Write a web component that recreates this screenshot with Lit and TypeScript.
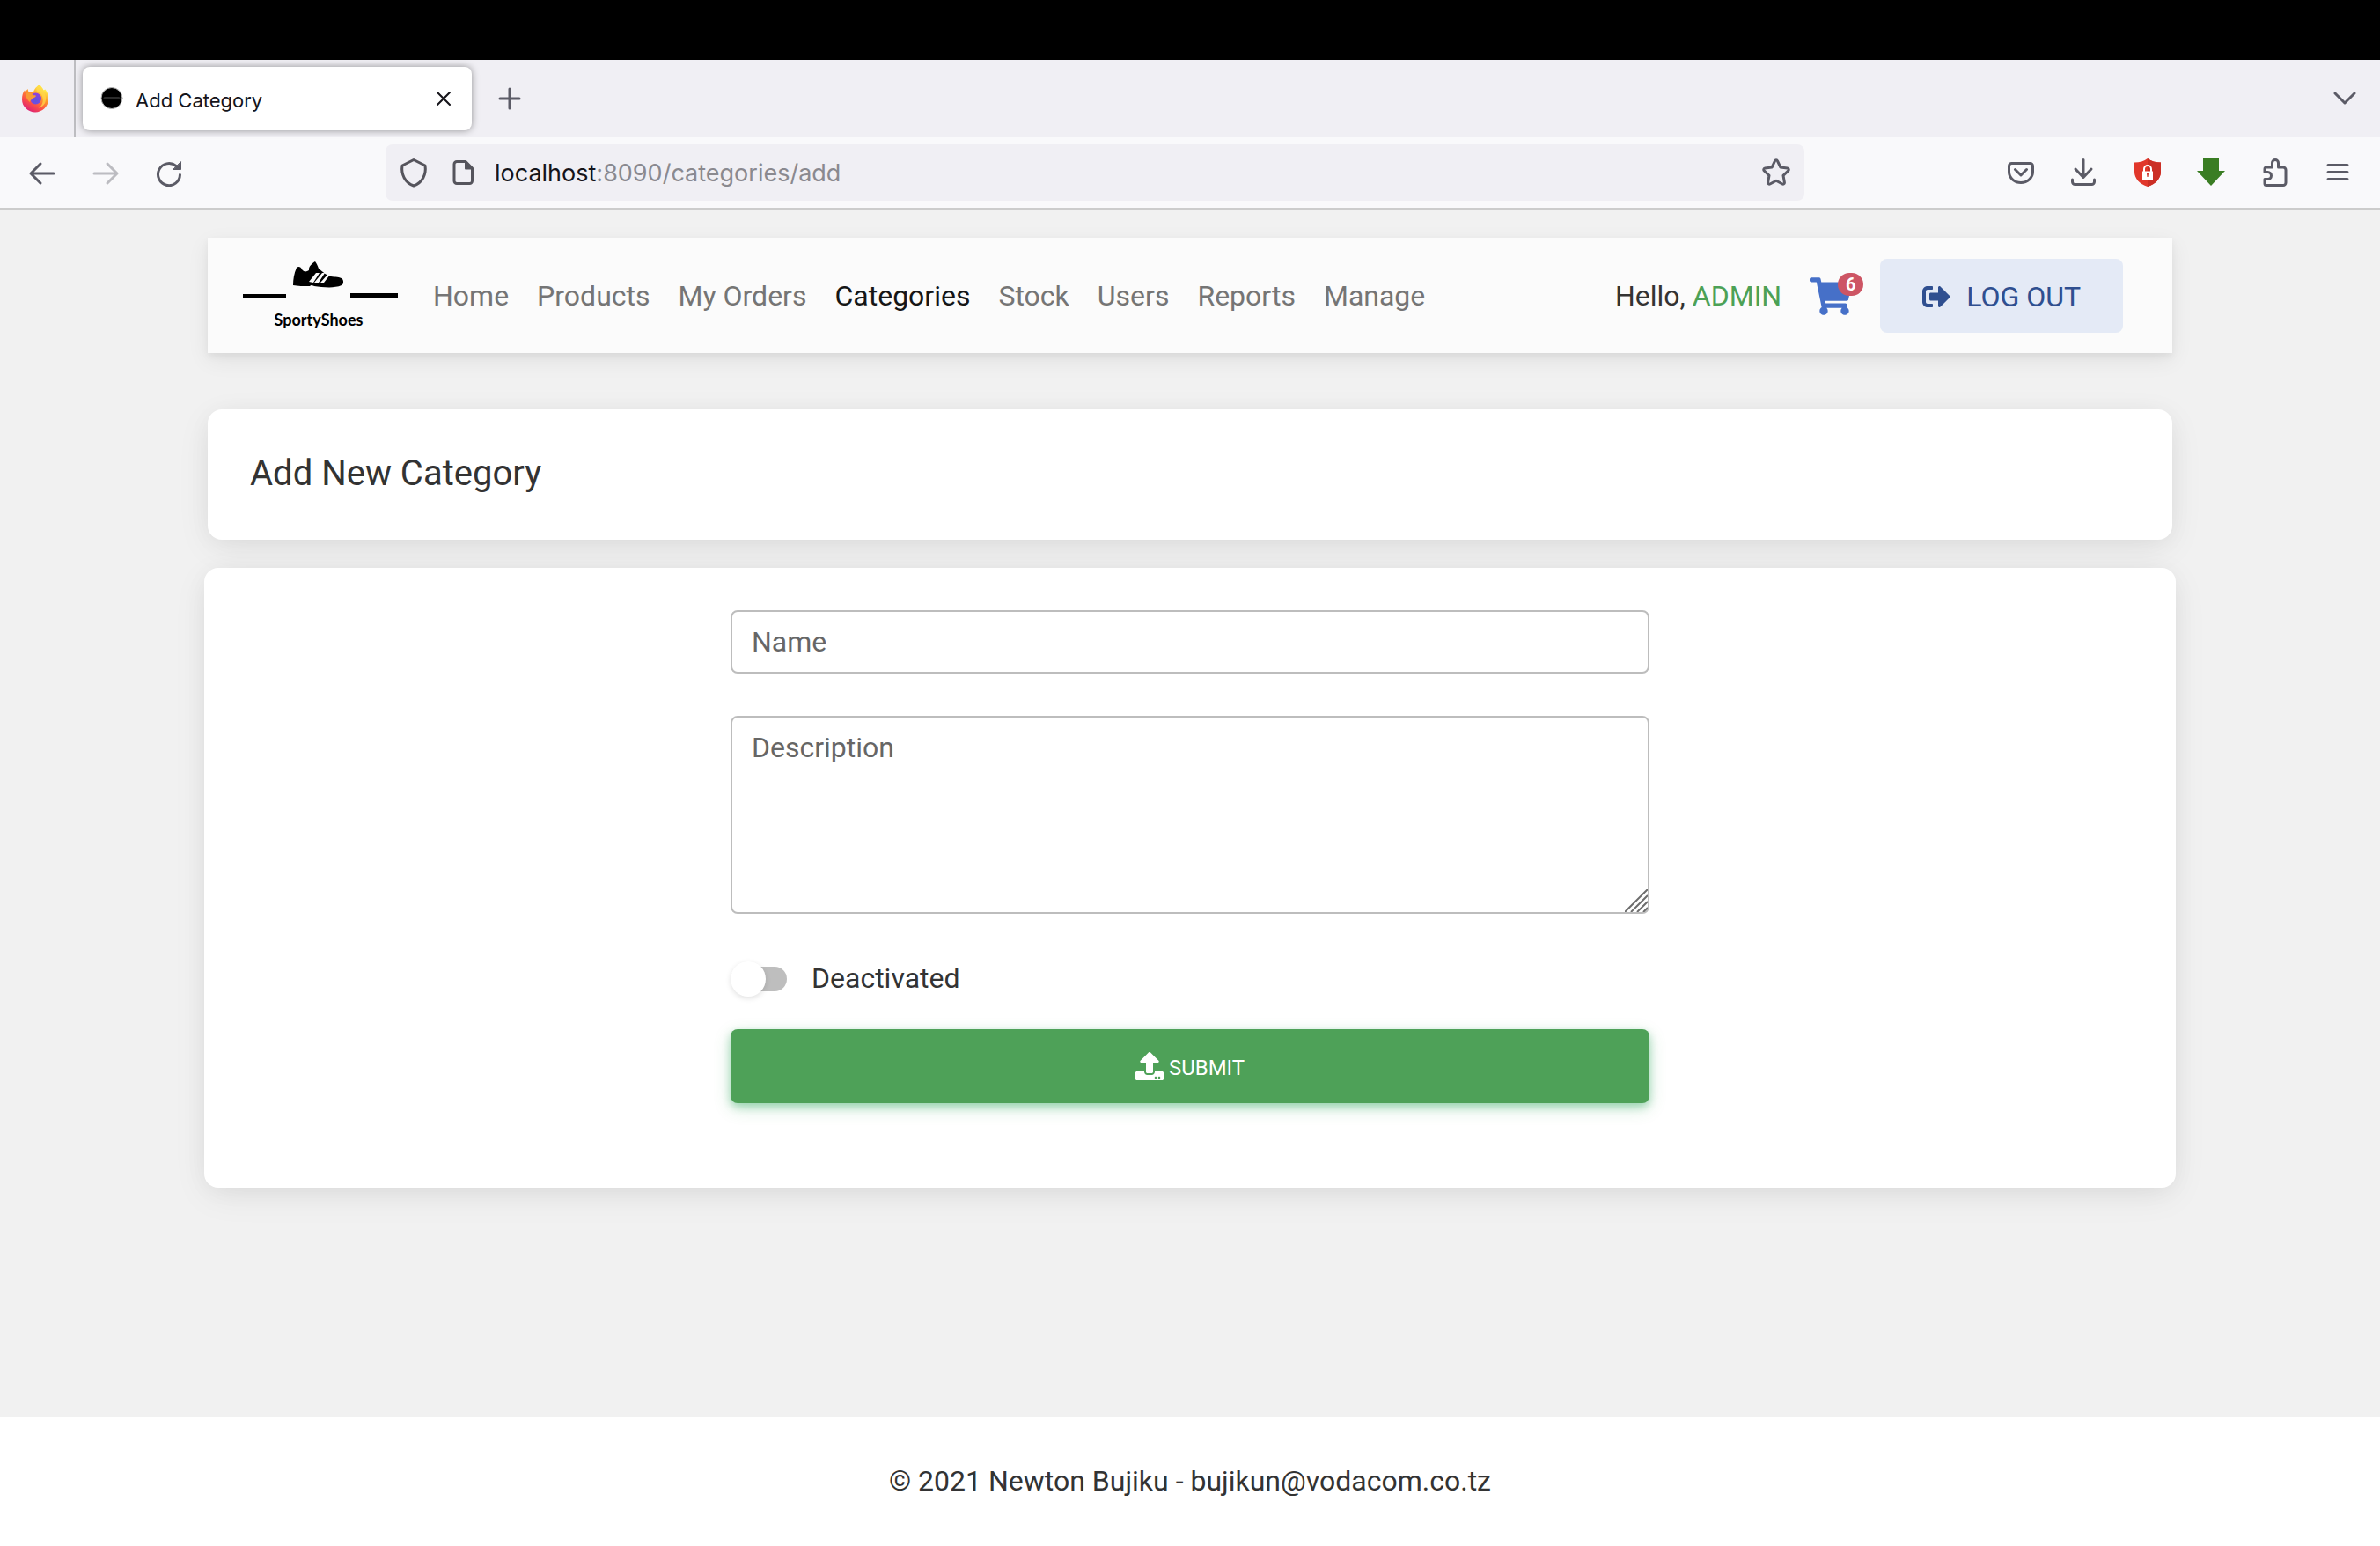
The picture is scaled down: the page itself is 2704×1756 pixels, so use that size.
import { LitElement, html, css } from "lit";
import { customElement, property, state } from "lit/decorators.js";
import { classMap } from "lit/directives/class-map.js";

const sans = css`Roboto, "Liberation Sans", sans-serif`;
const chrome = css`Inter, "Liberation Sans", sans-serif`;

@customElement("browser-chrome")
class BrowserChrome extends LitElement {
  static styles = css`
    :host { display: block; font-family: ${chrome}; }
    .menubar { height: 68px; background: #000; }
    .tabs { display: flex; align-items: center; height: 88px; background: #f0eff4; }
    .pinned { display: flex; align-items: center; align-self: stretch; padding: 0 28px 0 24px; margin-right: 8px; border-right: 2px solid #bdbdc1; }
    .tab { display: flex; align-items: center; gap: 14px; box-sizing: border-box; width: 442px; height: 72px; padding: 0 16px 0 20px; border-radius: 8px; background: #fff; box-shadow: 0 0 8px rgba(0, 0, 0, 0.4); }
    .tab-title { flex: 1; padding-top: 3px; font-size: 22px; line-height: 32px; color: #15141a; }
    button { display: flex; align-items: center; justify-content: center; flex: none; padding: 0; border: 0; background: none; color: #5b5b66; }
    svg { display: block; fill: none; stroke: currentColor; stroke-width: 3; stroke-linecap: round; stroke-linejoin: round; }
    .solid { stroke: none; }
    .close { width: 32px; height: 32px; color: #15141a; }
    .close svg { stroke-width: 2; }
    .new-tab { width: 86px; height: 72px; }
    .all-tabs { width: 72px; height: 72px; margin-left: auto; margin-right: 4px; }
    .toolbar { display: flex; align-items: center; height: 80px; padding: 0 12px; background: #f9f9fb; border-bottom: 2px solid #ccc; }
    .tool { width: 72px; height: 72px; }
    .tool:disabled { color: #bcbcc1; }
    .address { display: flex; align-items: center; flex: 1; box-sizing: border-box; height: 64px; margin: 0 210px; padding: 0 14px 0 12px; border-radius: 8px; background: #f0eff4; color: #55545c; }
    .address .page { margin: 0 24px; }
    .url { flex: 1; padding-top: 2px; font-size: 27px; line-height: 40px; color: #8a898f; }
    .host { color: #15141a; }
    .star { color: #5b5b66; }
  `;

  render() {
    return html`
      <div class="menubar"></div>
      <div class="tabs">
        <div class="pinned">
          <svg class="solid" width="32" height="32" viewBox="0 0 31 32">
            <defs>
              <linearGradient id="flame" x1="0.85" y1="0.05" x2="0.3" y2="1">
                <stop offset="0.1" stop-color="#fff04a" />
                <stop offset="0.4" stop-color="#ff9a2a" />
                <stop offset="0.7" stop-color="#fb5145" />
                <stop offset="1" stop-color="#dc1e78" />
              </linearGradient>
              <radialGradient id="globe" cx="0.5" cy="0.7" r="0.7">
                <stop offset="0" stop-color="#5a55e0" />
                <stop offset="1" stop-color="#9340d8" />
              </radialGradient>
            </defs>
            <path fill="url(#flame)" d="M20 0c2 1.500 4 4 5 6.500l2-1c2.500 3 3.500 7 3.500 11C30.500 25 23.500 31.500 15.500 31.500S.5 25 .5 17c0-4.500 1-8 3-10.500l1 1.500 2.500-3 1 3.500c1.500-.6 3-.5 5.500-.3C14.500 5 17 2.500 20 0z" />
            <circle fill="url(#globe)" cx="16" cy="16" r="6.500" />
            <path fill="#f89a35" d="M4.500 10c3-1.500 6-.5 8.500 2 1.500.4 3 0 3.500 1-.5 1.500-3 2-4 3-1 1.200-2.500 1.500-3 4-2.500-2-5-6-5-10z" />
            <path fill="#ffd84a" d="M20 0c-3 3-4 6-2 8 3 1 6 4 6 8 1 5-2 9-5 11 7-2 10-8 8-15-1-5-4-9-7-12z" opacity=".75" />
          </svg>
        </div>
        <div class="tab">
          <svg width="26" height="26" viewBox="0 0 26 26">
            <circle cx="13" cy="12.500" r="12" fill="#000" stroke="#b5b5b5" stroke-width="1" />
            <path d="M5 12.500h16" stroke="#2c2c2c" stroke-width="3" />
          </svg>
          <span class="tab-title">Add Category</span>
          <button class="close" aria-label="Close tab">
            <svg width="18" height="18" viewBox="0 0 18 18"><path d="M2 2l14 14M16 2L2 16" /></svg>
          </button>
        </div>
        <button class="new-tab" aria-label="New tab">
          <svg width="26" height="26" viewBox="0 0 26 26"><path d="M13 2v22M2 13h22" /></svg>
        </button>
        <button class="all-tabs" aria-label="List all tabs">
          <svg width="26" height="16" viewBox="0 0 26 16"><path d="M2 2l11 11L24 2" /></svg>
        </button>
      </div>
      <div class="toolbar">
        <button class="tool" aria-label="Back">
          <svg width="32" height="32" viewBox="0 0 32 32"><path d="M29 17H3M14 6L3 17l11 11" /></svg>
        </button>
        <button class="tool" aria-label="Forward" disabled>
          <svg width="32" height="32" viewBox="0 0 32 32"><path d="M3 17h26M18 6l11 11-11 11" /></svg>
        </button>
        <button class="tool" aria-label="Reload">
          <svg width="32" height="32" viewBox="0 0 32 32">
            <path d="M28.500 18.500A12.500 12.500 0 1 1 24 8.500" />
            <path d="M29.500 4v8.500H21z" fill="currentColor" stroke-width="1" />
          </svg>
        </button>
        <div class="address">
          <svg width="40" height="36" viewBox="0 0 40 36"><path d="M20 3.500l13 6.500c1.500 10-3 19.500-13 23-10-3.500-14.500-13-13-23z" /></svg>
          <svg class="page" width="24" height="28" viewBox="0 0 24 28">
            <path d="M5 1.500h10L22.500 9v14.500a3 3 0 0 1-3 3H5a3 3 0 0 1-3-3v-19a3 3 0 0 1 3-3z" />
            <path d="M15 2v7.500h7z" fill="currentColor" stroke-width="2" />
          </svg>
          <span class="url"><span class="host">localhost</span>:8090/categories/add</span>
          <button class="star" aria-label="Bookmark this page">
            <svg width="36" height="36" viewBox="0 0 36 36"><path d="M16.500 4.800c.6-1.300 2.400-1.300 3 0l3.400 7.200 7.800 1c1.500.2 2 1.900 1 2.900l-5.700 5.400 1.400 7.900c.2 1.400-1.200 2.400-2.400 1.800L18 27.200 11 31c-1.200.6-2.600-.4-2.400-1.800L10 21.300l-5.700-5.400c-1-1-.5-2.700 1-2.900l7.800-1z" /></svg>
          </button>
        </div>
        <button class="tool" aria-label="Save to Pocket">
          <svg width="32" height="32" viewBox="0 0 32 32"><path d="M5.500 5.500h21a3 3 0 0 1 3 3V15a13.500 12.500 0 0 1-27 0V8.500a3 3 0 0 1 3-3zM9.500 12.500L16 19l6.500-6.500" /></svg>
        </button>
        <button class="tool" aria-label="Downloads">
          <svg width="32" height="32" viewBox="0 0 32 32"><path d="M15 1.500V21M6 12l9 9.500 9-9.500M2.500 24v2.500a3 3 0 0 0 3 3h19a3 3 0 0 0 3-3V24" /></svg>
        </button>
        <button class="tool" aria-label="Ad blocker">
          <svg width="32" height="32" viewBox="0 0 32 32">
            <g class="solid">
              <path fill="#e1372b" d="M16 0c4 3 9 4.500 15 4.500V15c0 8-6 14-15 17C7 29 1 23 1 15V4.500C7 4.500 12 3 16 0z" />
              <path fill="#cb2f25" d="M16 0c4 3 9 4.500 15 4.500V15c0 8-6 14-15 17z" />
              <path fill="#fff" d="M10 14.500h12V24H10z" />
              <path fill="#cb2f25" d="M15 17h2l-.5 4h-1z" />
            </g>
            <path d="M12 14.500V12a4 4 0 0 1 8 0v2.500" stroke="#fff" stroke-width="2" />
          </svg>
        </button>
        <button class="tool" aria-label="Download helper">
          <svg class="solid" width="32" height="32" viewBox="0 0 32 32"><path fill="#3a7d23" d="M7 0h18v14h7L16 31 0 14h7z" /></svg>
        </button>
        <button class="tool" aria-label="Extensions">
          <svg width="32" height="32" viewBox="0 0 32 32"><path d="M7 10h6.500V5a3.500 3.500 0 0 1 7 0v5H26a3 3 0 0 1 3 3v14.500a3 3 0 0 1-3 3H7a2 2 0 0 1-2-2v-5h3.500a4 4 0 0 0 0-8H5V12a2 2 0 0 1 2-2z" /></svg>
        </button>
        <button class="tool" aria-label="Menu">
          <svg width="32" height="32" viewBox="0 0 32 32"><path d="M5 7.500h22M5 15.500h22M5 23.500h22" /></svg>
        </button>
      </div>
    `;
  }
}

@customElement("site-nav")
class SiteNav extends LitElement {
  @property() current = "Categories";
  @property({ type: Number }) cartCount = 6;

  static styles = css`
    :host { display: block; font-family: ${sans}; font-size: 32px; line-height: 51px; color: #333; }
    .bar { display: flex; align-items: center; padding: 24px 56px 23px 40px; background: #fbfbfb; box-shadow: 0 8px 24px rgba(0, 0, 0, 0.07), 0 4px 8px rgba(0, 0, 0, 0.05); }
    .logo { display: block; margin-right: 24px; }
    .logo svg { display: block; }
    .wordmark { font: 700 18px Lato, sans-serif; }
    .links { display: flex; margin: 0; padding: 0; list-style: none; }
    a { color: #757575; text-decoration: none; }
    .link { display: block; padding: 0 16px; }
    .link.active { color: #161616; }
    .user { display: flex; align-items: center; margin-left: auto; }
    .name { color: #4ca156; }
    .cart { position: relative; display: block; margin: 0 32px; color: #4670c8; }
    .cart svg { display: block; }
    .badge { position: absolute; top: -5px; left: 32px; width: 29px; border-radius: 13px; background: #cd5564; color: #fff; font-size: 20px; font-weight: 700; line-height: 26px; text-align: center; }
    .logout { display: flex; align-items: center; gap: 18px; height: 84px; padding: 2px 48px 0; border: 0; border-radius: 8px; background: #e4eaf6; color: #2f4f90; font: 400 32px ${sans}; }
  `;

  private items = ["Home", "Products", "My Orders", "Categories", "Stock", "Users", "Reports", "Manage"];

  render() {
    return html`
      <nav class="bar">
        <a class="logo" href="#" aria-label="SportyShoes">
          <svg width="176" height="82" viewBox="0 0 176 82">
            <path d="M0 39h49v5H0zM122 38h54v5h-54z" />
            <path d="M57 29c0-7 1-13 4-20 2-2 5-1 6 2 2 3 5 3 8 1-1-4 4-8 7-10 2 3 3 5 4 8 5 4 9 8 14 9 5 1 10 0 13 3 2 3 1 6-1 7-9 4-22 2-31 1-1 0-3-2-5 0-7 0-14 0-19-1z" />
            <path d="M75 25l8-10h4l-7 11zM81 26l9-11h3l-7 11zM88 26l8-9h3l-7 9z" fill="#fbfbfb" />
            <text class="wordmark" x="86" y="75" text-anchor="middle">SportyShoes</text>
          </svg>
        </a>
        <ul class="links">
          ${this.items.map(
            (item) => html`<li><a href="#" class=${classMap({ link: true, active: item === this.current })}>${item}</a></li>`
          )}
        </ul>
        <div class="user">
          <span>Hello, <span class="name">ADMIN</span></span>
          <a class="cart" href="#" aria-label="Cart">
            <svg width="48" height="43" viewBox="0 0 576 512" fill="currentColor"><path d="M528.12 301.319l47.273-208C578.806 78.301 567.391 64 551.990 64H159.208l-9.166-44.810C147.758 8.021 137.930 0 126.529 0H24C10.745 0 0 10.745 0 24v16c0 13.255 10.745 24 24 24h69.883l70.248 343.435C147.325 417.100 136 435.222 136 456c0 30.928 25.072 56 56 56s56-25.072 56-56c0-15.674-6.447-29.835-16.824-40h209.647C430.447 426.165 424 440.326 424 456c0 30.928 25.072 56 56 56s56-25.072 56-56c0-22.172-12.888-41.332-31.579-50.405l5.517-24.276c3.413-15.018-8.002-29.319-23.403-29.319H218.117l-6.545-32h293.145c11.206 0 20.920-7.754 23.403-18.681z" /></svg>
            <span class="badge">${this.cartCount}</span>
          </a>
          <button class="logout">
            <svg width="32" height="32" viewBox="0 0 512 512" fill="currentColor"><path d="M497 273L329 441c-15 15-41 4.500-41-17v-96H152c-13.300 0-24-10.700-24-24v-96c0-13.300 10.700-24 24-24h136V88c0-21.400 25.900-32 41-17l168 168c9.300 9.400 9.300 24.600 0 34zM192 436v-40c0-6.600-5.400-12-12-12H96c-17.700 0-32-14.300-32-32V160c0-17.700 14.300-32 32-32h84c6.600 0 12-5.400 12-12V76c0-6.600-5.400-12-12-12H96c-53 0-96 43-96 96v192c0 53 43 96 96 96h84c6.600 0 12-5.400 12-12z" /></svg>
            LOG OUT
          </button>
        </div>
      </nav>
    `;
  }
}

@customElement("category-form")
class CategoryForm extends LitElement {
  @state() private active = false;

  static styles = css`
    :host { display: block; font-family: ${sans}; font-size: 32px; line-height: 51px; color: #333; }
    .form { display: flex; flex-direction: column; max-width: 1044px; margin: 0 auto; }
    .field { display: block; box-sizing: border-box; width: 100%; margin: 0; padding: 8px 22px; border: 2px solid #bdbdbd; border-radius: 8px; outline: 0; background: #fff; color: #333; font: 400 32px/52px ${sans}; }
    .field::placeholder { color: #666; opacity: 1; }
    .name { height: 72px; margin-bottom: 48px; }
    .area { position: relative; margin-bottom: 48px; }
    .description { height: 225px; resize: none; }
    .grip { position: absolute; right: 2px; bottom: 2px; pointer-events: none; }
    .toggle { display: flex; align-items: center; gap: 28px; margin-bottom: 32px; }
    .switch { position: relative; flex: none; width: 64px; height: 28px; margin: 0; border-radius: 14px; background: #bebebe; appearance: none; }
    .switch::before { content: ""; position: absolute; left: 0; top: -6px; width: 40px; height: 40px; border-radius: 50%; background: #fff; box-shadow: 0 2px 6px rgba(0, 0, 0, 0.12); }
    .switch:checked { background: #a5d0ab; }
    .switch:checked::before { left: 24px; background: #4ca156; }
    .submit { display: flex; align-items: center; justify-content: center; gap: 6px; height: 84px; padding: 0; border: 0; border-radius: 8px; background: #4ea158; color: #fff; font: 400 24px/40px ${sans}; box-shadow: 0 4px 10px rgba(0, 150, 60, 0.3), 0 6px 20px rgba(0, 150, 60, 0.2); }
    .caption { padding-top: 4px; }
  `;

  render() {
    return html`
      <form class="form" @submit=${(e: Event) => e.preventDefault()}>
        <input class="field name" type="text" placeholder="Name" aria-label="Name" />
        <div class="area">
          <textarea class="field description" placeholder="Description" aria-label="Description"></textarea>
          <svg class="grip" width="26" height="26" viewBox="0 0 26 26" fill="none" stroke="#6d6d6d" stroke-width="2">
            <path d="M0 26L26 0M7 26L26 7M14 26l12-12M21 26l5-5" />
          </svg>
        </div>
        <div class="toggle">
          <input id="status" class="switch" type="checkbox" role="switch" .checked=${this.active}
            @change=${(e: Event) => (this.active = (e.target as HTMLInputElement).checked)} />
          <label for="status">${this.active ? "Activated" : "Deactivated"}</label>
        </div>
        <button class="submit" type="submit">
          <svg width="32" height="32" viewBox="0 0 512 512" fill="currentColor"><path d="M296 384h-80c-13.300 0-24-10.700-24-24V192h-87.700c-17.800 0-26.700-21.500-14.100-34.100L242.300 5.700c7.500-7.500 19.800-7.500 27.300 0l152.200 152.200c12.600 12.600 3.700 34.100-14.100 34.100H320v168c0 13.300-10.700 24-24 24zm216-8v112c0 13.300-10.700 24-24 24H24c-13.300 0-24-10.700-24-24V376c0-13.300 10.700-24 24-24h136v8c0 30.900 25.100 56 56 56h80c30.900 0 56-25.100 56-56v-8h136c13.300 0 24 10.700 24 24zm-124 88c0-11-9-20-20-20s-20 9-20 20 9 20 20 20 20-9 20-20zm64 0c0-11-9-20-20-20s-20 9-20 20 9 20 20 20 20-9 20-20z" /></svg>
          <span class="caption">SUBMIT</span>
        </button>
      </form>
    `;
  }
}

@customElement("app-root")
class AppRoot extends LitElement {
  static styles = css`
    :host { display: flex; flex-direction: column; min-height: 100vh; background: #f1f1f1; font-family: ${sans}; font-size: 32px; line-height: 51px; color: #333; }
    .main { flex: 1; box-sizing: border-box; width: 100%; max-width: 2280px; margin: 0 auto; padding: 32px 24px; }
    .card { border-radius: 16px; background: #fff; box-shadow: 0 4px 30px -6px rgba(0, 0, 0, 0.07), 0 10px 40px rgba(0, 0, 0, 0.06); }
    .heading { margin-top: 64px; padding: 48px 48px 50px; }
    .title { margin: 0; font-size: 40px; font-weight: 400; line-height: 50px; }
    .body { margin: 32px -4px 0; padding: 48px 48px 96px; }
    .footer { padding: 48px; background: #fff; text-align: center; }
  `;

  render() {
    return html`
      <browser-chrome></browser-chrome>
      <main class="main">
        <site-nav></site-nav>
        <section class="card heading"><h1 class="title">Add New Category</h1></section>
        <section class="card body"><category-form></category-form></section>
      </main>
      <footer class="footer">© 2021 Newton Bujiku - bujikun@vodacom.co.tz</footer>
    `;
  }
}
